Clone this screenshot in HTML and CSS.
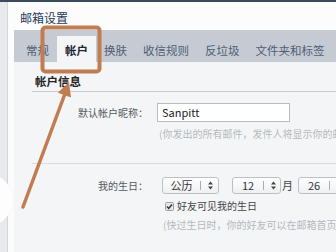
FILE: index.html
```html
<!DOCTYPE html>
<html lang="zh-CN">
<head>
<meta charset="utf-8">
<title>邮箱设置</title>
<link rel="stylesheet" href="styles.css">
</head>
<body>
<div class="topline"></div>
<div class="page">
  <aside class="rail"></aside>
  <main class="main">
    <div class="title">邮箱设置</div>
    <nav class="tabs">
      <span class="tab">常规</span>
      <span class="tab tab-active">帐户</span>
      <span class="tab">换肤</span>
      <span class="tab">收信规则</span>
      <span class="tab">反垃圾</span>
      <span class="tab">文件夹和标签</span>
    </nav>
    <section class="panel">
      <div class="section">
        <h2 class="heading">帐户信息</h2>
        <div class="row row-nick">
          <label class="label label-input">默认帐户昵称：</label>
          <div class="field field-input">
            <div class="input">Sanpitt</div>
            <div class="hint">(你发出的所有邮件，发件人将显示你的邮件昵称)</div>
          </div>
        </div>
        <div class="sep"></div>
        <div class="row row-birth">
          <label class="label label-select">我的生日：</label>
          <div class="field field-select">
            <div class="selects">
              <div class="sel sel-cal"><span class="sv">公历</span><span class="bar"></span><svg class="updown" width="5" height="9" viewBox="0 0 5 9"><polygon points="0,3.6 2.5,0.4 5,3.6" fill="#444"/><polygon points="0,5.4 2.5,8.6 5,5.4" fill="#444"/></svg></div>
              <div class="sel sel-num"><span class="sv">12</span><span class="bar"></span><svg class="updown" width="5" height="9" viewBox="0 0 5 9"><polygon points="0,3.6 2.5,0.4 5,3.6" fill="#444"/><polygon points="0,5.4 2.5,8.6 5,5.4" fill="#444"/></svg></div>
              <span class="unit">月</span>
              <div class="sel sel-num"><span class="sv">26</span><span class="bar"></span><svg class="updown" width="5" height="9" viewBox="0 0 5 9"><polygon points="0,3.6 2.5,0.4 5,3.6" fill="#444"/><polygon points="0,5.4 2.5,8.6 5,5.4" fill="#444"/></svg></div>
            </div>
            <div class="check">
              <svg class="cbox" width="9" height="9" viewBox="0 0 9 9"><rect x="0.5" y="0.5" width="8" height="8" rx="1" fill="#e6e7e9" stroke="#9a9ea4"/><polyline points="2,4.6 3.7,6.4 7,2.4" fill="none" stroke="#333" stroke-width="1.5"/></svg>
              <span class="ctext">好友可见我的生日</span>
            </div>
            <div class="hint hint-birth">(快过生日时，你的好友可以在邮箱首页看到提醒)</div>
          </div>
        </div>
      </div>
    </section>
  </main>
</div>
<div class="bubble"></div>
<svg class="annot" width="336" height="252" viewBox="0 0 336 252">
  <rect x="42.5" y="27.5" width="57" height="44" rx="3" fill="none" stroke="#c17d52" stroke-width="4"/>
  <line x1="23" y1="207" x2="64.5" y2="95" stroke="#c17d52" stroke-width="3.5" stroke-linecap="round"/>
  <polygon points="69,82 71,97.5 57.8,92.7" fill="#c17d52"/>
</svg>
</body>
</html>
```

FILE: styles.css
```css
* { box-sizing: border-box; }
html, body {
  margin: 0;
  padding: 0;
  width: 336px;
  height: 252px;
  overflow: hidden;
  background: #fcfcfd;
  font-family: "Noto Sans CJK SC", "Noto Sans", "Liberation Sans", sans-serif;
  position: relative;
}
.topline {
  height: 2px;
  background: #3b4a5c;
}
.page {
  display: flex;
  height: 250px;
}
.rail {
  width: 8px;
  flex: none;
  background: #e7e9ec;
  border-right: 1px solid #d3d6db;
}
.main {
  flex: 1;
  min-width: 0;
  margin-left: 6px;
  overflow: hidden;
  white-space: nowrap;
}
.title {
  height: 28px;
  padding: 8px 0 0 6px;
  font-size: 12px;
  line-height: 16px;
  color: #263a58;
}
.tabs {
  display: flex;
  height: 32px;
  padding: 6px 0 0 4px;
  background: #c6cbd3;
}
.tab {
  padding: 4px 8px 0;
  height: 26px;
  font-size: 11.5px;
  line-height: 20px;
  color: #4f5e74;
}
.tab-active {
  background: #f4f5f7;
  color: #1e2633;
  font-weight: bold;
}
.panel {
  background: #f4f5f7;
  height: 190px;
}
.section {
  padding-left: 18px;
}
.heading {
  margin: 0;
  padding: 10px 0 0 3px;
  font-size: 11.5px;
  line-height: 19px;
  font-weight: bold;
  color: #222;
  border-bottom: 1px solid #c9cdd3;
}
.row {
  display: flex;
  align-items: flex-start;
}
.row-nick { margin-top: 11px; }
.row-birth { margin-top: 13px; }
.label {
  width: 116px;
  flex: none;
  text-align: right;
  font-size: 10px;
  color: #555a60;
}
.label-input { line-height: 19px; }
.label-select { line-height: 17px; }
.field-input { margin-left: 9px; }
.field-select { margin-left: 14px; }
.input {
  width: 133px;
  height: 19px;
  border: 1px solid #b8bcc2;
  background: #fff;
  padding-left: 4px;
  font-size: 11px;
  line-height: 17px;
  color: #222;
}
.hint {
  margin-top: 6px;
  padding-left: 2px;
  font-size: 10px;
  line-height: 12px;
  color: #b5b9bf;
}
.hint-birth {
  margin-top: 7px;
  padding-left: 1px;
}
.sep {
  margin-top: 23px;
  height: 1px;
  background: #d9dce0;
}
.selects {
  display: flex;
  align-items: center;
}
.sel {
  display: flex;
  align-items: center;
  height: 17px;
  border: 1px solid #bcc0c5;
  border-radius: 3px;
  background: linear-gradient(#ffffff, #eef0f2);
  font-size: 11px;
  color: #333;
}
.sel-cal { width: 57px; }
.sel-cal .sv { width: 37px; }
.sel-num { width: 49px; }
.sel-num .sv { width: 30px; }
.sel-num + .sel-num,
.sel-cal + .sel-num { margin-left: 13px; }
.sv {
  text-align: center;
  line-height: 15px;
}
.bar {
  width: 1px;
  height: 9px;
  background: #a9adb3;
}
.updown {
  margin-left: 7px;
  display: block;
}
.unit {
  margin: 0 5px 0 1px;
  font-size: 11px;
  line-height: 17px;
  color: #444;
}
.check {
  display: flex;
  align-items: center;
  margin-top: 6px;
  margin-left: 3px;
  height: 12px;
}
.cbox { display: block; }
.ctext {
  margin-left: 3px;
  font-size: 10px;
  line-height: 12px;
  color: #444;
}
.bubble {
  position: absolute;
  left: -41px;
  top: 173px;
  width: 54px;
  height: 54px;
  border-radius: 50%;
  background: #fdfdfd;
  box-shadow: 0 0 3px rgba(0, 0, 0, 0.06);
}
.annot {
  position: absolute;
  left: 0;
  top: 0;
  pointer-events: none;
}
```
